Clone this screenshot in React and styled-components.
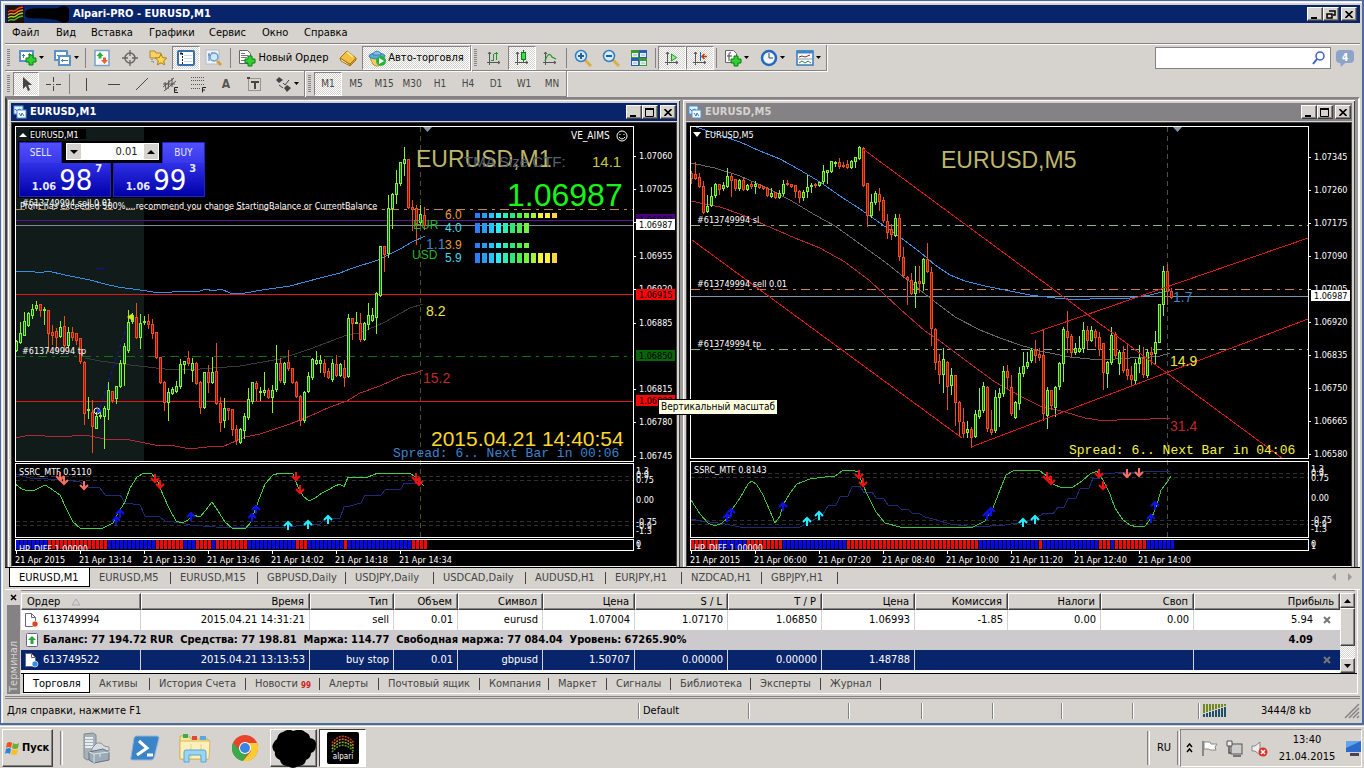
import React from 'react';
import styled, { createGlobalStyle, css } from 'styled-components';


const UI_FONT = '"DejaVu Sans Condensed", "DejaVu Sans", sans-serif';
const ARIAL = '"Liberation Sans", Arial, sans-serif';
const MONO = '"Liberation Mono", "Courier New", monospace';
const FACE = '#d6d3ce';
const NAVY = '#08246b';


const GlobalStyle = createGlobalStyle`
    * { box-sizing: border-box; }
    body {
        margin: 0;
        background: #3a6ea5;
        font-family: ${UI_FONT};
        font-size: 11px;
        line-height: 14px;
        color: #000;
    }
    button, input { font: inherit; color: inherit; }
`;


const raised = css`
    border: 1px solid;
    border-color: #fff #404040 #404040 #fff;
    box-shadow: inset -1px -1px 0 #848284;
`;

const dither = css`
    background: repeating-conic-gradient(#fff 0 25%, ${FACE} 0 50%) 0 0 / 2px 2px;
`;


/* ---------- shell ---------- */

const Desktop = styled.div`
    display: flex;
    flex-direction: column;
    min-height: 100vh;
`;

const AppWindow = styled.div`
    position: relative;
    display: flex;
    flex-direction: column;
    padding: 4px 2px 0 4px;
    background: ${FACE};
    border: 1px solid #4a6c9c;
    border-width: 1px 2px 2px 1px;
    box-shadow: inset 1px 1px 0 #e8e6f0, inset 2px 2px 0 #fff;
`;

const TitleBar = styled.header`
    display: flex;
    align-items: center;
    height: 18px;
    padding: 0 ${({ $child }) => ($child ? 1 : 3)}px 0 2px;
    background: ${({ $inactive }) => ($inactive ? '#848284' : NAVY)};
    color: ${({ $inactive }) => ($inactive ? '#d6d3ce' : '#fff')};
    font-weight: bold;
`;

const TitleText = styled.span`
    flex: 1;
    padding-left: 3px;
`;

const CaptionButtons = styled.div`
    display: flex;

    button:last-child { margin-left: 2px; }
`;

const CaptionButton = styled.button`
    ${raised}
    display: grid;
    place-items: center;
    width: 16px;
    height: 14px;
    padding: 0;
    background: ${FACE};
`;

const MenuBar = styled.nav`
    display: flex;
    height: 20px;
    align-items: center;
    padding-left: 1px;
`;

const MenuItem = styled.button`
    width: ${({ $w }) => $w}px;
    padding: 0 0 0 6px;
    border: 0;
    background: none;
    text-align: left;
`;


/* ---------- toolbars ---------- */

const TopRow = styled.div`
    display: flex;
    height: 28px;
    padding-top: 1px;
    border-top: 1px solid #848284;
    box-shadow: inset 0 1px 0 #fff;
    justify-content: space-between;
`;

const ToolGroup = styled.div`
    display: flex;
    align-items: center;
    height: 26px;
    padding-left: 2px;
    border-right: 1px solid #848284;
    border-bottom: 1px solid #848284;
    box-shadow: 1px 1px 0 #fff;
`;

const Groups = styled.div`
    display: flex;
    gap: 1px;
`;

const Grip = styled.span`
    width: 3px;
    height: 18px;
    margin-right: 3px;
    background: repeating-linear-gradient(#848284 0 1px, ${FACE} 1px 2px);
`;

const Tool = styled.button`
    display: flex;
    align-items: center;
    justify-content: center;
    gap: 2px;
    width: ${({ $w }) => ($w ? `${$w}px` : '28px')};
    height: 24px;
    padding: 0;
    border: 1px solid transparent;
    background: none;
    white-space: nowrap;
    ${({ $on }) => $on && css`
        ${dither}
        border-color: #848284 #fff #fff #848284;
        background-clip: padding-box;
    `}

    b { color: #555; font-size: 12px; }
`;

const Period = styled(Tool)`
    color: #444;
    font-size: 10px;
`;

const Divider = styled.span`
    width: 1px;
    height: 20px;
    margin: 0 2px;
    background: #848284;
`;

const SearchArea = styled.div`
    display: flex;
    align-items: center;
    gap: 4px;
    padding-right: 5px;
`;

const SearchBox = styled.label`
    display: flex;
    align-items: center;
    width: 176px;
    height: 22px;
    padding-right: 4px;
    background: #fff;
    border: 1px solid #848284;

    input {
        flex: 1;
        min-width: 0;
        border: 0;
        outline: 0;
        background: none;
    }
`;


/* ---------- chart windows ---------- */

const Workspace = styled.main`
    display: flex;
    gap: 3px;
    padding: 1px 3px 0 1px;
    background: #9c9a98;
    border: 2px solid;
    border-color: #848284 #fff #848284 #404040;
    border-bottom: 0;
`;

const ChildWindow = styled.section`
    flex: 1;
    min-width: 0;
    padding: 3px 3px 0;
    background: ${FACE};
    box-shadow: inset 1px 1px 0 #fff, inset -1px 0 0 #404040;
`;

const ChartFrame = styled.div`
    position: relative;
    margin-top: 1px;
    border: 1px solid #404040;
    border-bottom-color: #eee;
    background: #000;

    svg { display: block; }
`;

const ChartSvg = styled.svg`
    width: 100%;
    height: auto;
    font-family: ${UI_FONT};
    font-size: 9px;
    fill: #fff;
`;

const TradePanel = styled.div`
    position: absolute;
    top: 18px;
    left: 6px;
    width: 188px;
    padding: 1px;
    background: #000;
    color: #fff;
`;

const TradeTop = styled.div`
    display: flex;
    justify-content: space-between;
`;

const blue = css`
    border: 1px solid #2222c0;
    padding: 0;
    color: #e8e8ff;
`;

const SideButton = styled.button`
    ${blue}
    width: 43px;
    height: 21px;
    background: linear-gradient(#5050ff, #3838e8);
    border-bottom: 0;
    font-size: 10px;
`;

const Lot = styled.div`
    display: flex;
    height: 17px;
    margin-top: 1px;

    input {
        width: 61px;
        padding: 0 5px;
        border: 0;
        text-align: right;
        color: #222;
    }

    button {
        display: grid;
        place-items: center;
        width: 16px;
        padding: 0;
        border: 1px solid #fff;
        background: ${FACE};
    }
`;

const TradeBottom = styled.div`
    display: flex;
    gap: 2px;
`;

const PriceButton = styled.button`
    ${blue}
    flex: 1;
    display: flex;
    align-items: flex-end;
    justify-content: center;
    gap: 3px;
    height: 34px;
    padding: 0 0 3px 4px;
    background: linear-gradient(#3030e8, #0000a8);
    border-top: 0;

    small { font-size: 11px; line-height: 12px; font-weight: bold; }
    big { font-size: 29px; line-height: 26px; color: #fff; }
    sup { font-size: 11px; line-height: 12px; align-self: flex-start; font-weight: bold; }
`;

const Tooltip = styled.div`
    position: absolute;
    left: 657px;
    top: 398px;
    height: 16px;
    padding: 0 2px;
    border: 1px solid #000;
    background: #ffffe1;
    font-size: 10px;
    white-space: nowrap;
`;


/* ---------- tabs ---------- */

const TabStrip = styled.div`
    display: flex;
    align-items: flex-start;
    height: ${({ $h }) => $h}px;
    padding-left: ${({ $pad }) => $pad}px;
    border-top: 1px solid #000;
    color: #444;
`;

const Tab = styled.button`
    display: flex;
    align-items: center;
    gap: 3px;
    width: ${({ $w }) => $w}px;
    height: 19px;
    padding: 1px 0 0 9px;
    border: 0;
    background: linear-gradient(#444, #444) right 4px / 1px 12px no-repeat;
    white-space: nowrap;
    ${({ $active }) => $active && css`
        background: #fff;
        border: 1px solid #000;
        border-top: 0;
        color: #000;
    `}

    b { color: #d02020; font-size: 8px; line-height: 8px; padding-top: 3px; }
`;

const TabArrows = styled.span`
    display: flex;
    gap: 12px;
    margin: 5px 8px 0 auto;
`;


/* ---------- terminal ---------- */

const Terminal = styled.section`
    display: flex;
    border-top: 1px solid #fff;
    padding: 0 2px 2px 0;
    border-bottom: 1px solid #848284;
`;

const Rail = styled.div`
    display: flex;
    flex-direction: column;
    align-items: center;
    width: 16px;

    button {
        border: 0;
        background: none;
        padding: 0;
        height: 15px;
    }
`;

const RailLabel = styled.div`
    flex: 1;
    width: 13px;
    padding-top: 2px;
    background: #848284;
    color: #d6d3ce;
    line-height: 13px;
    writing-mode: vertical-rl;
    transform: rotate(180deg);
`;

const TerminalBody = styled.div`
    flex: 1;
    min-width: 0;
    border-right: 1px solid #fff;
    border-bottom: 1px solid #fff;
`;

const TableArea = styled.div`
    display: flex;
    height: 83px;
    margin-right: 2px;
    padding-top: 2px;
    border-top: 1px solid #848284;
    overflow: hidden;
`;

const TableView = styled.div`
    flex: 1;
    min-width: 0;
    overflow: hidden;
    background: #fff;
`;

const Table = styled.table`
    width: 100%;
    table-layout: fixed;
    border-collapse: separate;
    border-spacing: 0;

    th {
        ${raised}
        height: 17px;
        padding: 0 5px;
        background: ${FACE};
        font-weight: normal;
        text-align: right;
    }
    th:first-child { text-align: left; }

    td {
        height: 20px;
        padding: 0 4px;
        border-right: 1px solid #d6d3ce;
        text-align: right;
        white-space: nowrap;
    }
    td:first-child { text-align: left; padding: 0 3px; }
    td:last-child { border-right: 0; padding-right: 6px; }
`;

const Row = styled.tr`
    ${({ $selected }) => $selected && css`
        background: ${NAVY};
        color: #fff;
    `}
    ${({ $summary }) => $summary && css`
        background: #cccacc;
        font-weight: bold;

        td { border-right: 0; }
    `}
`;

const Cell = styled.span`
    display: flex;
    align-items: center;
    gap: 4px;
    justify-content: ${({ $end }) => ($end ? 'flex-end' : 'flex-start')};
`;

const IconSlot = styled.span`
    display: grid;
    place-items: center;
    width: 15px;
    height: 16px;
`;

const CloseMark = styled.button`
    width: 17px;
    padding: 0 0 0 6px;
    border: 0;
    background: none;
    display: flex;
`;

const ScrollBar = styled.div`
    ${dither}
    display: flex;
    flex-direction: column;
    width: 15px;

    button {
        ${raised}
        display: grid;
        place-items: center;
        height: 15px;
        padding: 0;
        background: ${FACE};
    }
    span {
        ${raised}
        height: 38px;
        margin-bottom: auto;
        background: ${FACE};
    }
`;


/* ---------- status bar ---------- */

const StatusBar = styled.footer`
    display: flex;
    align-items: center;
    height: 25px;
    padding-left: 2px;
    box-shadow: inset 0 1px 0 #848284;
    margin-top: 1px;
`;

const StatusCell = styled.span`
    display: flex;
    align-items: center;
    height: 16px;
    ${({ $w }) => ($w ? `width: ${$w}px;` : 'flex: 1;')}
    padding-left: ${({ $first }) => ($first ? 0 : 4)}px;
    border-left: ${({ $first }) => ($first ? 0 : 1)}px solid #848284;
    box-shadow: ${({ $first }) => ($first ? 'none' : 'inset 1px 0 0 #fff')};
    gap: 34px;
`;


/* ---------- task bar ---------- */

const TaskBar = styled.footer`
    display: flex;
    align-items: center;
    height: 44px;
    padding: 2px 2px 0 2px;
    background: ${FACE};
    box-shadow: inset 0 1px 0 #d6d3ce, inset 0 2px 0 #fff;
`;

const StartButton = styled.button`
    ${raised}
    display: flex;
    align-items: center;
    gap: 1px;
    width: 51px;
    height: 38px;
    padding: 0 2px;
    background: ${FACE};
    font-weight: bold;
`;

const TaskDivider = styled.span`
    width: 3px;
    height: 34px;
    margin-left: ${({ $gap }) => $gap}px;
    border-left: 1px solid #848284;
    border-right: 1px solid #fff;
`;

const Launcher = styled.button`
    display: grid;
    place-items: center;
    width: 50px;
    height: 38px;
    padding: 0;
    border: 0;
    background: none;
`;

const TaskButton = styled(Launcher)`
    ${raised}
    width: 47px;
    margin-right: 2px;
    overflow: visible;
    ${({ $active }) => $active && css`
        background: #fff;
        border-color: #404040 #fff #fff #404040;
        box-shadow: none;
    `}
`;

const Quick = styled.div`
    display: flex;
    margin-left: 7px;
    flex: 1;
`;

const Tray = styled.div`
    display: flex;
    align-items: center;
    gap: 8px;
    width: 182px;
    height: 38px;
    padding: 0 0 0 5px;
    border: 1px solid;
    border-color: #848284 #fff #fff #848284;
`;

const Lang = styled.span`
    padding: 0 6px 0 7px;
`;

const Clock = styled.time`
    flex: 1;
    text-align: center;
    line-height: 17px;
`;


/* ---------- icons ---------- */

const Svg = ({ w = 18, h = w, children }) => (
    <svg width={w} height={h} viewBox={`0 0 ${w} ${h}`} fill="none" aria-hidden="true">{children}</svg>
);

const Down = () => <Svg w={5} h={3}><path d="M0 0h5L2.5 3z" fill="#000" /></Svg>;
const Plus = ({ x, y }) => (
    <path d={`M${x + 3} ${y}h4v3h3v4h-3v3h-4v-3h-3v-4h3z`} fill="#2fd02f" stroke="#0a7d12" />
);
const Axes = () => <path d="M4.500 3v13M2 13.500h13M3 5l1.500-2L6 5M13 12l2 1.500-2 1.500" stroke="#555" />;

const icons = {
    newChart: <Svg><rect x="1" y="2" width="13" height="10" fill="#fff" stroke="#5a92c8" strokeWidth="2" /><path d="M4.500 5v4M3 6.500h3M10.500 4v3M9 5.500h3" stroke="#5a7a9c" /><Plus x={7} y={6} /></Svg>,
    profiles: <Svg><rect x="1" y="2" width="12" height="9" fill="#fff" stroke="#5a92c8" strokeWidth="2" /><path d="M3 6.500h3" stroke="#5a7a9c" /><rect x="5" y="7" width="11" height="9" fill="#fff" stroke="#5a92c8" strokeWidth="2" /><path d="M8.500 10v3M7 11.500h7" stroke="#5a7a9c" /></Svg>,
    market: <Svg><rect x="2" y="1.500" width="14" height="15" fill="#fff" stroke="#7aa0cc" strokeWidth="1.500" /><path d="M7 3l3.500 4H8.500v2.500h-3V7h-2z" fill="#2cae3a" /><path d="M11.500 15L8 11h2V8.500h3V11h2z" fill="#f06030" /></Svg>,
    target: <Svg><circle cx="9" cy="9" r="5" stroke="#666" strokeWidth="1.500" /><path d="M9 1v6M9 11v6M1 9h6M11 9h6" stroke="#666" strokeWidth="1.300" /></Svg>,
    navigator: <Svg><path d="M1 2h5l1 2h5v5H1z" fill="#f4d468" stroke="#b08a28" /><path d="M3 10v3h3" stroke="#666" strokeDasharray="1 1" /><path d="M12 5l1.700 3.600 4 .5-3 2.700.8 4-3.500-2-3.500 2 .8-4-3-2.700 4-.5z" fill="#ffd84a" stroke="#b07a18" /></Svg>,
    dataWindow: <Svg><rect x="1" y="2" width="16" height="14" rx="1" fill="#fff" stroke="#3a6eb4" strokeWidth="2" /><path d="M3 4.500h2" stroke="#222" strokeWidth="2" /><path d="M5.500 4v11" stroke="#222" strokeDasharray="2 1" /><path d="M7 6.500h8M7 9.500h8M7 12.500h8" stroke="#c8dcf4" /></Svg>,
    tester: <Svg><rect x="1" y="1" width="13" height="14" fill="#eef4fb" stroke="#b4bcc8" /><path d="M4 4v8M3 6h2M7 3v4M11 4v4" stroke="#4a7ab4" /><circle cx="9" cy="8" r="4" fill="#cfe8fa" stroke="#6a9ccc" strokeWidth="1.500" /><path d="M12 12l4 4" stroke="#d8a030" strokeWidth="3" /></Svg>,
    order: <Svg><path d="M1.500 1.500h8l3 3v10h-11z" fill="#fff" stroke="#666" /><path d="M3 6.500h7M3 8.500h6M3 11.500h4M3 4.500h4" stroke="#777" /><Plus x={7} y={7} /></Svg>,
    book: <Svg><path d="M1 9l7-7 4 3 5 4-6 6z" fill="#f0c040" stroke="#a87414" /><path d="M1 9l9 6 1 2-9-5z" fill="#fff4c8" stroke="#a87414" /><path d="M11 15l6-6v2l-6 6z" fill="#d89a20" stroke="#a87414" /><path d="M8 3l6 5" stroke="#fbe38c" strokeWidth="2" /></Svg>,
    expert: <Svg><path d="M2 8c2 7 4 9 7 9s6-3 7-9z" fill="#f4cc58" stroke="#b8902c" /><ellipse cx="9" cy="7" rx="8" ry="3" fill="#5aa8dc" stroke="#3a7cb0" /><path d="M5 6c0-5 8-5 8 0z" fill="#7cc4ee" stroke="#3a7cb0" /><circle cx="13" cy="12" r="5" fill="#24b43a" /><path d="M11 9l5 3-5 3z" fill="#fff" /></Svg>,
    bars: <Svg><Axes /><path d="M8.500 5v7M6 11.500h2M11.500 3v8M9 4.500h4" stroke="#1c9a2c" /></Svg>,
    candles: <Svg><Axes /><path d="M10.500 1v12" stroke="#0a7d12" /><rect x="8.500" y="3.500" width="4" height="7" fill="#3cdc4c" stroke="#0a7d12" /></Svg>,
    line: <Svg><Axes /><path d="M4 12c3-8 5-8 7-4l4 2" stroke="#1c9a2c" strokeWidth="1.300" /></Svg>,
    zoomIn: <Svg><path d="M11 11l6 6" stroke="#d8b040" strokeWidth="3" /><circle cx="7" cy="7" r="5.500" fill="#d4ecfc" stroke="#3a7cc0" strokeWidth="1.500" /><path d="M4 7h6M7 4v6" stroke="#2060a8" strokeWidth="2" /></Svg>,
    zoomOut: <Svg><path d="M11 11l6 6" stroke="#d8b040" strokeWidth="3" /><circle cx="7" cy="7" r="5.500" fill="#d4ecfc" stroke="#3a7cc0" strokeWidth="1.500" /><path d="M4 7h6" stroke="#2060a8" strokeWidth="2" /></Svg>,
    tile: <Svg><path d="M1 1h8v8H1z" fill="#3a9a2c" /><path d="M9 1h8v8H9zM1 9h8v8H1z" fill="#2a5cb8" /><path d="M9 9h8v8H9z" fill="#3a9a2c" /><path d="M2 4h6v4H2zM10 4h6v4h-6zM2 12h6v4H2zM10 12h6v4h-6z" fill="#e8f0ff" /><path d="M3 6h4M11 6h4M3 14h4M11 14h4" stroke="#9ac" /></Svg>,
    autoScroll: <Svg><Axes /><path d="M8.500 5l5 3.500-5 3.500z" fill="#8cf08c" stroke="#1c9a2c" /></Svg>,
    shift: <Svg><Axes /><path d="M9.500 3v9" stroke="#2060a8" /><path d="M16 7.500h-5M13.500 5L11 7.500l2.500 2.500" stroke="#c03c10" strokeWidth="1.500" /></Svg>,
    indicators: <Svg><path d="M1.500 1.500h8l3 3v9h-11z" fill="#fff" stroke="#666" /><path d="M7 4c-2-1-2 0-2 2v6M3 7h5" stroke="#444" /><Plus x={7} y={7} /></Svg>,
    clock: <Svg><circle cx="9" cy="9" r="7" fill="#eef6ff" stroke="#2468bc" strokeWidth="2.500" /><path d="M9 4v5h4" stroke="#444" /></Svg>,
    template: <Svg><rect x="1" y="2" width="16" height="14" fill="#fff" stroke="#3a78b8" strokeWidth="1.500" /><path d="M1 3h16" stroke="#3a88cc" strokeWidth="3" /><path d="M3 8l3-1 3 1 5-2" stroke="#8c2c1c" /><path d="M1 10h16" stroke="#7a98b8" /><path d="M3 14l3-2 3 2 3-2 3 2" stroke="#2c8c3c" /></Svg>,
    cursor: <Svg><path d="M6 2v12l3-3 2 5 2-1-2-5h4z" fill="#444" /></Svg>,
    cross: <Svg><path d="M9.500 2v5M9.500 11v5M2 9.500h5M12 9.500h5M9 9.500h1" stroke="#444" /></Svg>,
    vline: <Svg><path d="M9.500 3v13" stroke="#444" /></Svg>,
    hline: <Svg><path d="M3 9.500h12" stroke="#444" /></Svg>,
    trend: <Svg><path d="M3 15L15 3" stroke="#444" /></Svg>,
    channel: <Svg><path d="M2 12L13 3M3 16L15 6M4 7l1 8M8 5l-1 9M11 3v9M2 9h12" stroke="#555" /><path d="M17 12.500h-3.500v5H17M13 15h3" stroke="#222" /></Svg>,
    fibo: <Svg><path d="M2 2.500h14M2 5.500h14M2 9.500h14M2 13.500h9" stroke="#555" strokeDasharray="1 1" /><path d="M17 12.500h-3.500v5M13 15h3" stroke="#222" /></Svg>,
    label: <Svg><path d="M3.500 3.500h12v12h-12z" stroke="#555" strokeDasharray="1 1" /><path d="M2 2h3v2H2z" fill="#444" /><path d="M6 7h8M10 7v7" stroke="#444" strokeWidth="2" /></Svg>,
    shapes: <Svg><path d="M5 2l4 3-4 3-3-3zM13 10l4 3-4 4-3-4z" fill="#444" /><path d="M9 8l2 2 4-5M9 13l-4-3" stroke="#444" /></Svg>,
    search: <Svg w={14}><circle cx="8" cy="5" r="4" stroke="#3a5cc0" strokeWidth="1.500" /><path d="M5 8l-4 5" stroke="#3a5cc0" strokeWidth="2" /></Svg>,
};

const AlpariLogo = () => (
    <Svg w={17}>
        <rect width="17" height="17" fill="#201008" />
        <path d="M1 6c4-4 5 1 8-2s4-2 7-3" stroke="#f04020" strokeWidth="1.500" />
        <path d="M1 9c4-4 5 1 8-2s4-2 7-3" stroke="#f09020" strokeWidth="1.500" />
        <path d="M1 12c4-4 5 1 8-2s4-2 7-3" stroke="#b0d030" strokeWidth="1.500" />
        <path d="M1 15c4-4 5 1 8-2s4-2 7-3" stroke="#40c030" strokeWidth="1.500" />
    </Svg>
);

const TitleScribble = () => (
    <Svg w={46} h={18}>
        <path d="M3 5C8 2 26 4 34 3c4-3 10-3 11 2v10c-2 4-8 3-10 1-5-3-24-2-30-3C-1 12 1 7 3 5z" fill="#000" />
    </Svg>
);

const ChildIcon = () => (
    <Svg w={14}>
        <rect x="1" y="1" width="9" height="8" fill="#e4f2ff" stroke="#4a94d8" />
        <path d="M2 4l2 2 2-2 2 1" stroke="#2c78c0" />
        <rect x="4" y="5" width="9" height="8" fill="#fff" stroke="#4a94d8" />
        <path d="M6 8l2 3 1-3 2 3" stroke="#2c78c0" />
    </Svg>
);

const Minimize = () => <Svg w={10} h={9}><path d="M1 8h6" stroke="#000" strokeWidth="2" /></Svg>;
const Maximize = () => <Svg w={10} h={9}><path d="M0 1h9" stroke="#000" strokeWidth="2" /><path d="M.5 1v7.500h8V1" stroke="#000" /></Svg>;
const Restore = () => <Svg w={10} h={9}><path d="M3 1h6v4H7M1 4h5v4H1z" stroke="#000" strokeWidth="1.500" /></Svg>;
const Close = () => <Svg w={8} h={7}><path d="M.5 0l7 7M7.500 0l-7 7" stroke="#000" strokeWidth="1.600" /></Svg>;
const Cross = () => <Svg w={8}><path d="M1 1l6 6M7 1L1 7" stroke="#777" strokeWidth="2" /></Svg>;

const OrderIcon = ({ color }) => (
    <Svg w={15} h={16}>
        <path d="M1.500 1.500h6l4 4v9h-10z" fill="#fff" stroke="#667" />
        <path d="M7.500 1.500v4h4" stroke="#667" />
        <circle cx="11" cy="12" r="3" fill={color} stroke="#fff" strokeWidth=".6" />
    </Svg>
);

const BalanceIcon = () => (
    <Svg w={12} h={14}>
        <rect x=".5" y=".5" width="11" height="13" rx="1" fill="#fff" stroke="#667" />
        <path d="M6 3l4 4H7.500v4h-3V7H2z" fill="#28a838" />
    </Svg>
);


/* ---------- chart data: direction, high, body top, body bottom, low ---------- */

const parse = (text) => text.trim().split(/\s*,\s*/).map((row) => {
    const [dir, ...nums] = row.split(' ');
    return [dir, ...nums.map(Number)];
});

const CANDLES_M1 = parse(`
u 340 341 350 351,u 322 333 342 343,u 312 321 335 335,u 312 313 325 326,u 304 309 315 318,u 301 305 308 310,d 304 304 310 316,u 307 309 310 324,
d 310 310 333 351,d 325 332 335 344,d 328 331 337 350,u 321 327 336 337,d 316 326 345 351,u 327 332 345 347,d 327 332 337 340,d 333 333 340 344,
d 338 338 361 363,d 361 362 413 424,u 397 409 410 418,d 400 412 426 452,u 412 416 428 428,u 412 415 416 418,u 406 408 416 448,u 382 390 409 419,
d 391 391 400 402,u 386 386 398 403,u 360 363 386 387,u 343 346 363 385,u 310 322 350 352,u 313 315 321 323,d 303 317 337 338,u 314 323 337 348,
u 316 321 322 324,d 314 321 324 328,d 319 324 333 338,d 332 332 357 358,d 357 357 382 383,d 381 382 402 410,u 388 392 402 420,u 387 389 393 394,
u 381 386 391 392,u 359 364 386 388,u 361 361 364 373,d 351 358 363 365,u 358 363 370 381,d 362 363 383 384,d 381 382 407 413,u 372 372 407 408,
d 365 372 382 392,u 357 372 382 383,d 343 371 403 404,d 397 403 422 431,u 398 408 420 427,d 408 408 410 419,d 409 409 429 435,d 425 429 440 444,
u 428 429 442 443,u 413 416 430 438,u 388 399 417 419,u 382 382 401 403,d 381 383 388 400,u 387 391 392 400,u 372 390 392 395,d 388 390 397 398,
u 385 390 397 412,u 345 363 389 391,d 358 363 380 382,u 362 363 382 384,d 350 362 368 370,d 368 368 382 383,d 381 382 396 397,d 395 396 420 425,
u 391 392 420 422,u 372 376 391 392,u 358 359 377 379,u 351 360 363 364,u 355 360 363 372,d 359 363 372 376,d 368 371 377 378,u 359 363 379 381,
d 355 364 375 376,u 363 364 375 376,d 360 368 377 386,u 314 318 376 377,d 318 318 323 339,u 312 322 323 323,d 313 323 339 341,u 322 323 339 340,
u 303 315 324 329,u 308 315 320 321,u 292 293 317 333,u 246 246 295 296,d 246 246 254 271,u 195 208 253 257,u 193 194 208 228,u 170 183 194 203,
u 162 162 183 185,u 147 159 163 175,d 159 159 207 208,d 200 207 209 230,d 205 208 223 244,u 205 214 222 224,d 207 215 225 229`);

const CANDLES_M5 = parse(`
d 171 173 178 183,d 162 174 178 179,d 173 177 186 187,d 181 186 212 213,u 195 206 211 212,u 187 196 205 206,u 183 184 195 197,d 184 184 189 194,
u 182 185 188 190,u 168 176 186 187,d 173 176 180 196,d 179 179 188 190,u 179 180 188 190,d 177 180 189 190,u 184 185 189 190,d 182 184 186 188,
u 181 184 186 193,d 184 184 187 188,d 186 186 188 189,d 187 188 195 196,u 188 193 196 197,d 192 192 197 198,u 190 193 197 198,u 180 184 193 195,
d 180 183 184 185,d 184 184 186 187,d 185 185 191 197,d 190 191 197 202,u 190 192 197 200,u 175 187 191 197,u 183 185 186 192,d 183 184 185 187,
u 182 182 185 186,u 165 171 181 183,u 170 170 172 183,u 161 161 171 172,u 161 162 163 166,d 158 162 166 168,d 162 165 166 167,d 160 164 167 168,
u 160 161 167 168,u 157 157 161 167,u 146 147 158 159,d 147 148 185 186,d 183 183 215 226,u 194 202 215 217,u 191 193 202 204,d 188 194 201 210,
d 197 200 220 222,d 214 221 232 238,d 224 229 234 239,u 214 218 235 236,d 214 218 256 260,d 247 257 275 277,d 276 277 279 304,d 273 280 293 294,
u 266 282 293 307,d 266 281 283 292,u 258 259 283 290,d 243 259 271 272,d 267 272 328 345,d 328 329 362 369,d 354 361 374 383,u 348 359 374 392,
d 361 362 386 409,u 368 375 385 394,d 375 375 402 425,d 401 402 421 435,d 408 422 433 437,u 421 429 432 437,d 427 429 437 447,u 410 414 436 437,
u 388 410 416 418,u 382 386 410 412,d 386 387 428 431,d 410 429 432 434,u 390 397 430 432,u 388 393 397 426,u 366 371 393 396,d 365 371 377 388,
d 375 387 413 415,u 401 402 417 418,u 367 373 403 409,u 352 366 373 376,u 352 362 366 368,u 348 350 360 362,d 340 350 355 362,d 348 354 357 360,
d 329 355 413 420,u 387 390 415 428,d 390 390 405 409,u 386 387 407 416,u 362 363 386 389,u 327 329 363 381,d 311 331 337 352,d 334 336 352 356,
u 343 348 352 354,u 336 348 351 352,u 322 330 348 352,d 326 330 340 348,u 326 330 340 341,d 329 331 337 346,d 332 337 349 355,d 343 343 372 389,
u 361 362 373 387,u 327 335 362 364,d 332 334 355 358,u 350 352 363 374,d 346 352 370 372,d 343 369 375 379,d 366 375 379 386,u 359 363 380 384,
u 345 358 363 372,d 347 358 374 377,u 349 352 375 377,d 347 352 354 364,u 331 342 353 363,u 304 304 342 342,u 266 271 304 315,d 264 271 291 304,
d 288 291 297 298`);

const BAR_COLORS = ['#2a7ff8', '#2a9cf4', '#20c4ff', '#2aeef4', '#2aefb4', '#2ae87a', '#4cee4c', '#74f43c', '#a4f43c', '#f4f43c', '#fcf03c', '#f8d840'];

const Candles = ({ data, x }) => data.map(([dir, high, top, bottom, low], i) => {
    const cx = x + i * 4;
    const up = dir === 'u';
    const edge = up ? '#8cf032' : '#e4501e';
    return (
        <g key={cx}>
            <rect x={cx} y={high} width="1" height={low - high + 1} fill={edge} />
            <rect x={cx - 1} y={top} width="3" height={bottom - top + 1} fill={edge} />
            {bottom - top > 1 && (
                <rect x={cx} y={top + 1} width="1" height={bottom - top - 1} fill={up ? '#007020' : '#a80c04'} />
            )}
        </g>
    );
});

const Strength = ({ x, runs }) => {
    const cells = runs.flatMap((n) => Array(Math.abs(n)).fill(n > 0 ? '#0808f0' : '#f00808'));
    return cells.map((fill, i) => <rect key={i} x={x + i * 4} y="540" width="3" height="9" fill={fill} />);
};

const ARROWS = { r: '#f41010', s: '#f87060', b: '#1010e8', c: '#20f0ff' };

const Arrows = ({ list }) => list.map(([kind, x, y]) => {
    const s = kind === 'r' || kind === 's' ? 1 : -1;
    return (
        <path
            key={`${x}-${y}`}
            d={`M${x} ${y - 4 * s}V${y + 4 * s}M${x - 4} ${y}L${x} ${y + 4 * s}L${x + 4} ${y}`}
            stroke={ARROWS[kind]}
            strokeWidth="2"
            fill="none"
        />
    );
});

const Curve = ({ pts, color }) => <polyline points={pts} stroke={color} fill="none" shapeRendering="crispEdges" />;

const HLine = ({ x1, x2, y, color, dash }) => (dash
    ? <path d={`M${x1} ${y}.500H${x2}`} stroke={color} strokeDasharray={dash} shapeRendering="crispEdges" />
    : <rect x={x1} y={y} width={x2 - x1} height="1" fill={color} />
);

const DASHDOT = '9 5 3 5';

const Panels = ({ left, right, split, osc }) => (
    <g shapeRendering="crispEdges" fill="none" stroke="#fff">
        <path d={`M${left}.500 126.500H${right}.500V${split}.500H${left}.500z`} />
        <path d={`M${left}.500 ${osc}.500H${right}.500V537.500H${left}.500z`} />
        <path d={`M${left}.500 539.500H${right}.500V550.500H${left}.500z`} />
    </g>
);

const PriceScale = ({ x, labels }) => labels.map(([value, y]) => (
    <g key={value}>
        <rect x={x} y={y} width="3" height="1" />
        <text x={x + 6} y={y + 3}>{value}</text>
    </g>
));

const PriceTag = ({ x, y, fill, color = '#000', children }) => (
    <g>
        <rect x={x} y={y} width="39" height="11" fill={fill} />
        <text x={x + 3} y={y + 9} fill={color}>{children}</text>
    </g>
);

const TimeScale = ({ x, labels }) => labels.map((label, i) => (
    <g key={label}>
        <rect x={x + 1 + i * 64} y="551" width="1" height="3" />
        <text x={x + i * 64} y="563">21 Apr {label}</text>
    </g>
));

const OscScale = ({ x, mid }) => (
    <g>
        {[['1.3', -26], ['0.9', -22], ['0.75', -17], ['0.00', 3], ['-0.75', 25], ['-0.9', 29], ['-1.3', 34]].map(([label, dy]) => (
            <text key={label} x={x} y={mid + dy}>{label}</text>
        ))}
        <text x={x} y="547">0</text>
        <text x={x} y="549">1</text>
    </g>
);

const Meter = ({ y, h, count }) => BAR_COLORS.slice(0, count).map((c, i) => (
    <rect key={c} x={475 + i * 7} y={y} width="5" height={h} fill={c} />
));


function ChartM1() {
    return (
        <ChartSvg viewBox="12 123 664 443" role="img" aria-label="EURUSD,M1">
            <rect x="16" y="127" width="128" height="334" fill="#111c1a" />
            <path d="M420.500 127V537" stroke="#505020" strokeDasharray="5 4" />
            <path d="M423 127h9l-4.500 5z" fill="#8494a4" />
            <HLine x1={16} x2={633} y={209} color="#b8865a" dash={DASHDOT} />
            <HLine x1={16} x2={633} y={220} color="#5a1490" />
            <HLine x1={16} x2={633} y={225} color="#7c8c9c" />
            <HLine x1={16} x2={633} y={294} color="#e01818" />
            <HLine x1={16} x2={633} y={356} color="#107010" dash={DASHDOT} />
            <HLine x1={16} x2={633} y={401} color="#e01818" />
            <Curve color="#3c8ce0" pts="15,272 30,271 40,273 48,271 65,275 90,280 105,284 118,287 140,290 160,293 185,291 197,292 206,289 213,291 221,289 230,293 245,293 262,290 290,286 320,278 340,273 350,269 378,260 400,249 412,242 425,236" />
            <Curve color="#3a3a3a" pts="85,358 100,361 130,365 165,369 200,369 240,366 280,359 310,349 347,335 360,333 385,322 410,308 423,304" />
            <Curve color="#b02838" pts="15,438 30,435 60,437 85,435 105,439 125,439 145,443 155,445 175,446 190,449 215,446 222,447 245,437 260,434 290,424 310,416 330,407 347,401 360,393 380,386 402,376 415,373 423,370" />
            <path d="M97 268.500h8" stroke="#1010b0" />
            <path d="M100 408L130 316" stroke="#1414b8" strokeDasharray="4 3" />
            <g shapeRendering="crispEdges"><Candles data={CANDLES_M1} x={16} /></g>
            <path d="M133 313v8l-6-4z" fill="#d8e020" />
            <circle cx="97" cy="411" r="3" fill="none" stroke="#fff" />
            <path d="M97 408l5 3-5 3z" fill="#2040e0" />

            <rect x="29" y="129" width="57" height="10" fill="#000" />
            <path d="M19 137h8l-4-4z" />
            <text x="30" y="138">EURUSD,M1</text>
            <text x="571" y="139" fontSize="10">VE_AIMS</text>
            <circle cx="622" cy="136" r="5" fill="none" stroke="#fff" />
            <path d="M620 134v1M624 134v1M619 137q3 4 6 0" stroke="#fff" fill="none" />

            <g fontFamily={ARIAL}>
                <text x="416" y="167" fontSize="23" fill="#bdb76b">EURUSD,M1</text>
                <text x="464" y="167" fontSize="15" fill="#56626e">TMA Size CTF:</text>
                <text x="592" y="167" fontSize="15" fill="#c8c83c">14.1</text>
                <text x="507" y="206" fontSize="32" fill="#18f418">1.06987</text>
                <text x="413" y="229" fontSize="12" fill="#2cb42c">EUR</text>
                <text x="412" y="259" fontSize="12" fill="#2cb42c">USD</text>
                <g fontSize="12">
                    <text x="445" y="219" fill="#e89c40">6.0</text>
                    <text x="445" y="232" fill="#40dce8">4.0</text>
                    <text x="445" y="249" fill="#e89c40">3.9</text>
                    <text x="445" y="262" fill="#40dce8">5.9</text>
                </g>
                <g fontSize="14">
                    <text x="426" y="249" fill="#3c84d0">1.1</text>
                    <text x="426" y="316" fill="#e8e840">8.2</text>
                    <text x="423" y="383" fill="#c02828">15.2</text>
                </g>
                <text x="431" y="446" fontSize="21" fill="#fcd828">2015.04.21 14:40:54</text>
            </g>
            <text x="393" y="457" fontFamily={MONO} fontSize="13" fill="#3c84d0">Spread: 6.. Next Bar in 00:06</text>

            <Meter y={213} h={5} count={12} />
            <Meter y={223} h={10} count={8} />
            <Meter y={243} h={5} count={8} />
            <Meter y={253} h={10} count={12} />

            <text x="20" y="209">Profit has exceeded 500%,...recommend you change StartingBalance or CurrentBalance</text>
            <text x="22" y="206">#613749994 sell 0.01</text>
            <text x="22" y="354">#613749994 tp</text>

            {[476, 480, 521, 525].map((y) => <HLine key={y} x1={16} x2={633} y={y} color="#303030" dash="4 3" />)}
            <Curve color="#1c2c78" pts="15,474 30,478 65,480 80,482 88,487 100,488 105,495 120,495 125,503 140,505 145,516 160,517 165,521 182,523 190,525 215,527 250,528 287,527 305,525 320,524 325,519 340,518 344,507 350,506 361,503 365,495 381,495 385,490 401,489 404,483 422,483" />
            <Curve color="#40d040" pts="15,484 22,489 28,491 35,490 45,485 50,488 60,495 66,508 73,522 80,528 90,529 103,528 113,523 118,513 125,502 130,488 137,477 144,473 152,474 158,482 163,495 170,510 176,521 182,523 188,520 193,515 200,517 205,511 212,502 218,511 225,522 232,528 245,529 251,522 258,502 265,484 273,475 280,473 293,474 298,487 303,496 309,501 315,498 322,493 328,490 335,486 340,484 344,487 348,477 368,477 378,473 410,473 415,477 424,486" />
            <Arrows list={[['s', 60, 476], ['s', 64, 480], ['s', 84, 485], ['r', 155, 478], ['r', 160, 484], ['b', 116, 521], ['b', 120, 514], ['b', 191, 517], ['b', 252, 518], ['b', 256, 510], ['r', 296, 476], ['r', 300, 489], ['c', 288, 526], ['c', 308, 525], ['c', 328, 520], ['r', 416, 477], ['r', 419, 481]]} />
            <text x="19" y="475">SSRC_MTF 0.5110</text>
            <Strength x={16} runs={[8, -15, 12, -7, 3, -4, 1, -8, 12, -3, 9, -1, 16, -4]} />
            <clipPath id="m1clip"><path d="M16 540h617v10H16z" /></clipPath>
            <text x="19" y="552" clipPath="url(#m1clip)">HP_DIFF 1.00000</text>

            <Panels left={15} right={633} split={461} osc={463} />
            <PriceScale x={633} labels={[['1.07060', 156], ['1.07025', 189], ['1.06990', 222], ['1.06955', 256], ['1.06920', 289], ['1.06885', 323], ['1.06815', 389], ['1.06780', 422], ['1.06745', 456]]} />
            <PriceTag x={636} y={214} fill="#4b0082">1.06992</PriceTag>
            <PriceTag x={636} y={219} fill="#fff">1.06987</PriceTag>
            <PriceTag x={636} y={289} fill="#f40808">1.06915</PriceTag>
            <PriceTag x={636} y={350} fill="#086408">1.06850</PriceTag>
            <PriceTag x={636} y={395} fill="#f40808">1.06800</PriceTag>
            <OscScale x={636} mid={500} />
            <TimeScale x={15} labels={['2015', '13:14', '13:30', '13:46', '14:02', '14:18', '14:34']} />
        </ChartSvg>
    );
}


function ChartM5() {
    return (
        <ChartSvg viewBox="687 123 664 443" role="img" aria-label="EURUSD,M5">
            <path d="M1167.500 127V537" stroke="#505040" strokeDasharray="5 4" />
            <path d="M1173 127h9l-4.500 5z" fill="#8494a4" />
            <HLine x1={691} x2={1308} y={225} color="#8cb48c" dash={DASHDOT} />
            <HLine x1={691} x2={1308} y={289} color="#c8864c" dash={DASHDOT} />
            <HLine x1={691} x2={1308} y={296} color="#7c98a4" />
            <HLine x1={691} x2={1308} y={349} color="#8cb48c" dash={DASHDOT} />
            <Curve color="#3c8ce0" pts="696,127 705,130 720,135 740,142 760,151 780,159 800,170 820,182 840,196 860,209 880,223 900,237 920,252 935,265 950,275 965,281 985,286 1010,291 1030,295 1055,298 1080,300 1100,298 1130,298 1150,295 1170,290" />
            <Curve color="#686868" pts="691,163 715,168 740,176 765,187 790,200 815,215 835,226 860,244 885,262 905,278 930,298 955,317 980,330 1000,338 1020,345 1040,351 1070,357 1100,360 1130,358 1150,357 1160,356 1170,353" />
            <Curve color="#b02838" pts="691,201 705,204 720,207 740,214 765,225 795,238 820,248 845,262 870,281 900,309 925,331 940,341 965,360 995,382 1020,396 1040,406 1065,412 1085,418 1105,421 1130,419 1150,419 1170,418" />
            <g shapeRendering="crispEdges"><Candles data={CANDLES_M5} x={691} /></g>
            <Curve color="#d81818" pts="692,240 962,438" />
            <Curve color="#d81818" pts="863,149 1282,458" />
            <Curve color="#d81818" pts="971,447 1308,319" />
            <Curve color="#d81818" pts="1031,334 1308,238" />

            <path d="M693 132h8l-4 5z" />
            <text x="705" y="138">EURUSD,M5</text>
            <text x="697" y="223">#613749994 sl</text>
            <text x="697" y="287">#613749994 sell 0.01</text>
            <text x="697" y="347">#613749994 tp</text>
            <g fontFamily={ARIAL} fontSize="14">
                <text x="941" y="168" fontSize="23" fill="#bdb76b">EURUSD,M5</text>
                <text x="1173" y="302" fill="#3c84d0">1.7</text>
                <text x="1170" y="366" fill="#e8e840">14.9</text>
                <text x="1170" y="431" fill="#c02828">31.4</text>
            </g>
            <text x="1069" y="454" fontFamily={MONO} fontSize="13" fill="#f4f440">Spread: 6.. Next Bar in 04:06</text>

            {[473, 477, 520, 524].map((y) => <HLine key={y} x1={691} x2={1308} y={y} color="#303030" dash="4 3" />)}
            <Curve color="#1c2c78" pts="691,519 700,521 710,522 725,524 740,527 800,527 815,519 822,516 828,506 836,505 840,497 848,496 852,487 860,486 864,493 872,492 876,498 884,499 888,505 897,505 901,509 908,509 912,513 920,514 925,517 937,520 950,524 975,527 1005,525 1018,523 1033,520 1044,513 1053,514 1058,507 1064,507 1068,499 1076,498 1080,489 1089,488 1093,478 1100,478 1104,474 1115,473 1170,471" />
            <Curve color="#40c040" pts="691,500 700,514 708,523 715,526 722,523 729,517 733,508 740,498 748,484 752,481 757,485 763,495 770,511 775,523 780,516 783,505 790,493 797,484 810,479 825,477 835,476 842,471 852,470 858,472 863,485 868,496 876,512 885,523 900,527 973,527 985,521 993,508 1000,490 1006,475 1013,471 1030,470 1040,471 1048,477 1053,484 1062,488 1073,487 1082,481 1090,474 1097,471 1103,480 1110,494 1115,508 1123,520 1130,525 1137,527 1145,526 1152,517 1157,505 1161,490 1168,481 1171,476" />
            <Arrows list={[['b', 727, 518], ['b', 731, 513], ['b', 783, 507], ['c', 807, 522], ['c', 819, 516], ['r', 859, 474], ['r', 863, 482], ['b', 987, 516], ['b', 991, 512], ['c', 1023, 523], ['c', 1035, 520], ['r', 1047, 476], ['r', 1051, 480], ['r', 1099, 473], ['r', 1103, 485], ['s', 1127, 473], ['s', 1139, 472], ['b', 1151, 519], ['b', 1155, 506]]} />
            <text x="694" y="473">SSRC_MTF 0.8143</text>
            <Strength x={691} runs={[-7, 7, -9, 16, -33, 15, -1, 14, -3, 1, -8, 7]} />
            <clipPath id="m5clip"><path d="M691 540h617v10H691z" /></clipPath>
            <text x="694" y="551" clipPath="url(#m5clip)">HP_DIFF 1.00000</text>

            <Panels left={690} right={1308} split={458} osc={461} />
            <PriceScale x={1308} labels={[['1.07345', 157], ['1.07260', 190], ['1.07175', 223], ['1.07090', 256], ['1.07005', 289], ['1.06920', 322], ['1.06835', 355], ['1.06750', 388], ['1.06665', 421], ['1.06580', 454]]} />
            <PriceTag x={1311} y={290} fill="#fff">1.06987</PriceTag>
            <OscScale x={1311} mid={498} />
            <TimeScale x={690} labels={['2015', '06:00', '07:20', '08:40', '10:00', '11:20', '12:40', '14:00']} />
        </ChartSvg>
    );
}


function OneClickTrading() {
    return (
        <TradePanel>
            <TradeTop>
                <SideButton>SELL</SideButton>
                <Lot>
                    <button aria-label="Decrease volume"><Svg w={8} h={4}><path d="M0 0h8L4 4z" fill="#000" /></Svg></button>
                    <input aria-label="Volume" defaultValue="0.01" />
                    <button aria-label="Increase volume"><Svg w={8} h={4}><path d="M0 4h8L4 0z" fill="#000" /></Svg></button>
                </Lot>
                <SideButton>BUY</SideButton>
            </TradeTop>
            <TradeBottom>
                <PriceButton><small>1.06</small><big>98</big><sup>7</sup></PriceButton>
                <PriceButton><small>1.06</small><big>99</big><sup>3</sup></PriceButton>
            </TradeBottom>
        </TradePanel>
    );
}


function WindowCaption({ restore }) {
    return (
        <CaptionButtons>
            <CaptionButton aria-label="Minimize"><Minimize /></CaptionButton>
            <CaptionButton aria-label="Maximize">{restore ? <Restore /> : <Maximize />}</CaptionButton>
            <CaptionButton aria-label="Close"><Close /></CaptionButton>
        </CaptionButtons>
    );
}


const MENU = [['Файл', 44], ['Вид', 35], ['Вставка', 58], ['Графики', 60], ['Сервис', 53], ['Окно', 42], ['Справка', 60]];

const PERIODS = ['M1', 'M5', 'M15', 'M30', 'H1', 'H4', 'D1', 'W1', 'MN'];

const CHART_TABS = [
    ['EURUSD,M1', 81], ['EURUSD,M5', 81], ['EURUSD,M15', 87], ['GBPUSD,Daily', 88], ['USDJPY,Daily', 88],
    ['USDCAD,Daily', 92], ['AUDUSD,H1', 80], ['EURJPY,H1', 76], ['NZDCAD,H1', 80], ['GBPJPY,H1', 76],
];

const TERMINAL_TABS = [
    ['Торговля', 67], ['Активы', 60], ['История Счета', 96], ['Новости', 74], ['Алерты', 59], ['Почтовый ящик', 101], ['Компания', 69],
    ['Маркет', 58], ['Сигналы', 64], ['Библиотека', 80], ['Эксперты', 70], ['Журнал', 60],
];

const COLUMNS = [
    ['Ордер', 120], ['Время', 169], ['Тип', 84], ['Объем', 64], ['Символ', 85], ['Цена', 92], ['S / L', 93], ['T / P', 94],
    ['Цена', 93], ['Комиссия', 93], ['Налоги', 93], ['Своп', 93], ['Прибыль', null],
];

const STATUS_CELLS = [110, 100, 73, 71, 69, 71, 66];


function Toolbars() {
    return (
        <>
            <TopRow>
                <Groups>
                    <ToolGroup>
                        <Grip />
                        <Tool $w={36} aria-label="New chart">{icons.newChart}<Down /></Tool>
                        <Tool $w={34} aria-label="Profiles">{icons.profiles}<Down /></Tool>
                        <Divider />
                        <Tool aria-label="Market watch">{icons.market}</Tool>
                        <Tool aria-label="Data window">{icons.target}</Tool>
                        <Tool aria-label="Navigator">{icons.navigator}</Tool>
                        <Tool $on aria-label="Terminal">{icons.dataWindow}</Tool>
                        <Tool aria-label="Strategy tester">{icons.tester}</Tool>
                        <Divider />
                        <Tool $w={101}>{icons.order}Новый Ордер</Tool>
                        <Tool aria-label="MetaEditor">{icons.book}</Tool>
                        <Tool $w={108} $on>{icons.expert}Авто-торговля</Tool>
                    </ToolGroup>
                    <ToolGroup>
                        <Grip />
                        <Tool aria-label="Bar chart">{icons.bars}</Tool>
                        <Tool $on aria-label="Candlesticks">{icons.candles}</Tool>
                        <Tool aria-label="Line chart">{icons.line}</Tool>
                        <Divider />
                        <Tool aria-label="Zoom in">{icons.zoomIn}</Tool>
                        <Tool aria-label="Zoom out">{icons.zoomOut}</Tool>
                        <Tool aria-label="Tile windows">{icons.tile}</Tool>
                        <Divider />
                        <Tool $on aria-label="Auto scroll">{icons.autoScroll}</Tool>
                        <Tool $on aria-label="Chart shift">{icons.shift}</Tool>
                        <Divider />
                        <Tool $w={35} aria-label="Indicators">{icons.indicators}<Down /></Tool>
                        <Tool $w={36} aria-label="Periods">{icons.clock}<Down /></Tool>
                        <Tool $w={36} aria-label="Templates">{icons.template}<Down /></Tool>
                    </ToolGroup>
                </Groups>
                <SearchArea>
                    <SearchBox>
                        <input type="text" aria-label="Search" />
                        {icons.search}
                    </SearchBox>
                    <Svg w={20} h={18}>
                        <rect x="1" y="1" width="18" height="13" rx="4" fill="#8ca4c8" />
                        <path d="M5 13h6l-5 5z" fill="#8ca4c8" />
                        <text x="7" y="12" fontSize="10" fontWeight="bold" fill="#fff">4</text>
                    </Svg>
                </SearchArea>
            </TopRow>
            <Groups>
                <ToolGroup>
                    <Grip />
                    <Tool $on aria-label="Cursor" $w={26}>{icons.cursor}</Tool>
                    <Tool aria-label="Crosshair">{icons.cross}</Tool>
                    <Divider />
                    <Tool aria-label="Vertical line">{icons.vline}</Tool>
                    <Tool aria-label="Horizontal line">{icons.hline}</Tool>
                    <Tool aria-label="Trendline">{icons.trend}</Tool>
                    <Tool aria-label="Channel">{icons.channel}</Tool>
                    <Tool aria-label="Fibonacci">{icons.fibo}</Tool>
                    <Tool aria-label="Text"><b>A</b></Tool>
                    <Tool aria-label="Label">{icons.label}</Tool>
                    <Tool $w={36} aria-label="Arrows">{icons.shapes}<Down /></Tool>
                </ToolGroup>
                <ToolGroup>
                    <Grip />
                    {PERIODS.map((p) => <Period key={p} $on={p === 'M1'}>{p}</Period>)}
                </ToolGroup>
            </Groups>
        </>
    );
}


function Orders() {
    return (
        <Table>
            <colgroup>
                {COLUMNS.map(([, width], i) => <col key={i} width={width || undefined} />)}
            </colgroup>
            <thead>
                <tr>
                    {COLUMNS.map(([label], i) => (
                        <th key={i}>
                            {i === 0 ? <Cell>{label}<Svg w={16} h={8}><path d="M8 7l4-6 4 6z" stroke="#aaa" /></Svg></Cell> : label}
                        </th>
                    ))}
                </tr>
            </thead>
            <tbody>
                <Row>
                    <td><Cell><OrderIcon color="#e04418" />613749994</Cell></td>
                    <td>2015.04.21 14:31:21</td><td>sell</td><td>0.01</td><td>eurusd</td><td>1.07004</td><td>1.07170</td><td>1.06850</td>
                    <td>1.06993</td><td>-1.85</td><td>0.00</td><td>0.00</td>
                    <td><Cell $end>5.94<CloseMark aria-label="Close order"><Cross /></CloseMark></Cell></td>
                </Row>
                <Row $summary>
                    <td colSpan="12">
                        <Cell><IconSlot><BalanceIcon /></IconSlot><span>Баланс: 77 194.72 RUR&nbsp; Средства: 77 198.81&nbsp; Маржа: 114.77&nbsp; Свободная маржа: 77 084.04&nbsp; Уровень: 67265.90%</span></Cell>
                    </td>
                    <td><Cell $end>4.09<CloseMark as="span" /></Cell></td>
                </Row>
                <Row $selected>
                    <td><Cell><OrderIcon color="#3090e0" />613749522</Cell></td>
                    <td>2015.04.21 13:13:53</td><td>buy stop</td><td>0.01</td><td>gbpusd</td><td>1.50707</td><td>0.00000</td><td>0.00000</td>
                    <td>1.48788</td><td colSpan="3" />
                    <td><Cell $end><CloseMark aria-label="Delete order"><Cross /></CloseMark></Cell></td>
                </Row>
            </tbody>
        </Table>
    );
}


function TerminalPanel() {
    return (
        <Terminal>
            <Rail>
                <button aria-label="Close terminal"><Svg w={7}><path d="M1 1l5 5M6 1L1 6" stroke="#000" strokeWidth="1.500" /></Svg></button>
                <RailLabel>Терминал</RailLabel>
            </Rail>
            <TerminalBody>
                <TableArea>
                    <TableView><Orders /></TableView>
                    <ScrollBar>
                        <button aria-label="Scroll up"><Svg w={7} h={4}><path d="M0 4h7L3.500 0z" fill="#000" /></Svg></button>
                        <span />
                        <button aria-label="Scroll down"><Svg w={7} h={4}><path d="M0 0h7L3.500 4z" fill="#000" /></Svg></button>
                    </ScrollBar>
                </TableArea>
                <TabStrip $h={20} $pad={2}>
                    {TERMINAL_TABS.map(([label, w], i) => (
                        <Tab key={label} $w={w} $active={i === 0}>{label}{label === 'Новости' && <b>99</b>}</Tab>
                    ))}
                </TabStrip>
            </TerminalBody>
        </Terminal>
    );
}


function WindowsTaskBar() {
    return (
        <TaskBar>
            <StartButton>
                <Svg w={16}>
                    <path d="M2 3q3-2 5 0l-1 5q-3-2-5 0z" fill="#f05020" />
                    <path d="M8 3q3 2 6 0l-1 5q-3 2-6 0z" fill="#70b030" />
                    <path d="M1 9q3-2 5 0l-1 5q-3-2-5 0z" fill="#3080d8" />
                    <path d="M7 9q3 2 6 0l-1 5q-3 2-6 0z" fill="#f8c020" />
                </Svg>
                Пуск
            </StartButton>
            <TaskDivider $gap={7} />
            <Quick>
                <Launcher aria-label="Server manager">
                    <Svg w={32}>
                        <path d="M5 2l9-1 3 2v23l-9 2-3-2z" fill="#a8b0b8" stroke="#808890" />
                        <path d="M6 6h8M6 9h8M6 12h8M6 15h8" stroke="#e8ecf0" strokeWidth="2" />
                        <path d="M14 15l4-4h4l3 3 5 1v4H12z" fill="#d8dce0" stroke="#8a929a" />
                        <path d="M10 20l14-3 6 3v8l-15 3-5-3z" fill="#9cabb8" stroke="#66727e" />
                        <path d="M10 20l5 2 15-2M15 22v9M21 21v4" stroke="#dde4ea" />
                    </Svg>
                </Launcher>
                <Launcher aria-label="PowerShell">
                    <Svg w={30} h={26}>
                        <path d="M6 1h21q2 0 2 2l-5 20q-1 2-3 2H2q-2 0-1-3L4 3q1-2 2-2z" fill="#3c84c8" stroke="#90b8dc" />
                        <path d="M9 6l8 7-10 7M17 20h6" stroke="#fff" strokeWidth="3" />
                    </Svg>
                </Launcher>
                <Launcher aria-label="Explorer">
                    <Svg w={34} h={32}>
                        <path d="M2 4h9l2 3h17v20H2z" fill="#f8e49c" stroke="#cfae54" />
                        <path d="M5 2h5v4H5z" fill="#3cae48" /><path d="M14 4h5v4h-5z" fill="#e04838" /><path d="M22 4h6v4h-6z" fill="#58a8e0" />
                        <path d="M2 9h30l-1 18H2z" fill="#fcf0b8" stroke="#d8b860" />
                        <path d="M13 12v14M23 12v14" stroke="#e8d088" />
                        <path d="M6 30V20q0-2 2-2h18q2 0 2 2v10h-5v-7H11v7z" fill="#9cd4f4" stroke="#58a4d4" />
                    </Svg>
                </Launcher>
                <Launcher aria-label="Chrome">
                    <Svg w={28}>
                        <circle cx="14" cy="14" r="13" fill="#e8442c" />
                        <path d="M2 9a13 13 0 0 0 10 18l6-10-4-3-5 2z" fill="#3aaa4c" />
                        <path d="M12 27a13 13 0 0 0 14-18H14l6 8z" fill="#fccc30" />
                        <circle cx="14" cy="14" r="6" fill="#fff" />
                        <circle cx="14" cy="14" r="5" fill="#3c84e0" />
                    </Svg>
                </Launcher>
                <TaskButton aria-label="Task">
                    <Svg w={46} h={38}>
                        <path d="M12 2q6-4 10-1 8-3 12 1 5 2 5 6 6 1 6 6 0 8-5 9 0 5-5 7-1 6-8 6-5 4-10 0-7 0-8-6-6-3-5-8-4-3-2-8 2-4 4-5 1-6 6-7z" fill="#000" />
                    </Svg>
                </TaskButton>
                <TaskButton $active aria-label="Alpari">
                    <Svg w={32}>
                        <rect width="32" height="32" rx="2" fill="#000" />
                        <path d="M5 11c7-9 15-9 22 0" stroke="#d03c28" strokeWidth="1.500" strokeDasharray="2 1" />
                        <path d="M5 14c7-9 15-9 22 0" stroke="#d88028" strokeWidth="1.500" strokeDasharray="2 1" />
                        <path d="M5 17c7-9 15-9 22 0" stroke="#a0b030" strokeWidth="1.500" strokeDasharray="2 1" />
                        <path d="M5 20c7-9 15-9 22 0" stroke="#58a030" strokeWidth="1.500" strokeDasharray="2 1" />
                        <text x="16" y="27" textAnchor="middle" fontSize="8" fill="#fff">alpari</text>
                    </Svg>
                </TaskButton>
            </Quick>
            <TaskDivider $gap={0} />
            <Lang>RU</Lang>
            <TaskDivider $gap={0} />
            <Tray>
                <Svg w={7} h={10}><path d="M1 4l2.500-3L6 4M1 9l2.500-3L6 9" stroke="#000" strokeWidth="1.500" /></Svg>
                <Svg w={17}><path d="M2 1v15" stroke="#888" strokeWidth="2" /><path d="M3 2h6l1 2h6l-2 3 1 3H9L8 9H3z" fill="#fff" stroke="#888" /></Svg>
                <Svg w={17}><rect x="5" y="4" width="11" height="10" fill="#ccc" stroke="#555" /><path d="M7 16h8M3 6v7h2" stroke="#555" strokeWidth="1.500" /><path d="M1 1h5v5H1z" fill="#eee" stroke="#555" /></Svg>
                <Svg w={17}><path d="M1 6h3l5-4v13l-5-4H1z" fill="#eee" stroke="#888" /><circle cx="12" cy="12" r="4.500" fill="#dc3028" /><path d="M10 10l4 4M14 10l-4 4" stroke="#fff" strokeWidth="1.500" /></Svg>
                <Clock>13:40<br />21.04.2015</Clock>
                <Svg w={15} h={18}><path d="M0 2h15v11H0z" fill="#2c6cc8" /><path d="M0 2h15L0 9z" fill="#64a4ec" /><path d="M4 14h9v3H4z" fill="#445" /></Svg>
            </Tray>
        </TaskBar>
    );
}


function App() {
    return (
        <Desktop>
            <GlobalStyle />
            <AppWindow>
                <TitleBar>
                    <AlpariLogo />
                    <TitleScribble />
                    <TitleText>Alpari-PRO - EURUSD,M1</TitleText>
                    <WindowCaption restore />
                </TitleBar>
                <MenuBar>
                    {MENU.map(([label, w]) => <MenuItem key={label} $w={w}>{label}</MenuItem>)}
                </MenuBar>
                <Toolbars />
                <Workspace>
                    <ChildWindow>
                        <TitleBar $child>
                            <ChildIcon />
                            <TitleText>EURUSD,M1</TitleText>
                            <WindowCaption />
                        </TitleBar>
                        <ChartFrame>
                            <ChartM1 />
                            <OneClickTrading />
                        </ChartFrame>
                    </ChildWindow>
                    <ChildWindow>
                        <TitleBar $child $inactive>
                            <ChildIcon />
                            <TitleText>EURUSD,M5</TitleText>
                            <WindowCaption />
                        </TitleBar>
                        <ChartFrame><ChartM5 /></ChartFrame>
                    </ChildWindow>
                </Workspace>
                <TabStrip $h={22} $pad={4}>
                    {CHART_TABS.map(([label, w], i) => <Tab key={label} $w={w} $active={i === 0}>{label}</Tab>)}
                    <TabArrows>
                        <Svg w={4} h={8}><path d="M4 0v8L0 4z" fill="#999" /></Svg>
                        <Svg w={4} h={8}><path d="M0 0v8l4-4z" fill="#999" /></Svg>
                    </TabArrows>
                </TabStrip>
                <TerminalPanel />
                <StatusBar>
                    <StatusCell $first>Для справки, нажмите F1</StatusCell>
                    <StatusCell $w={STATUS_CELLS[0]}>Default</StatusCell>
                    {STATUS_CELLS.slice(1).map((w, i) => <StatusCell key={i} $w={w} />)}
                    <StatusCell $w={146}>
                        <Svg w={24} h={13}>
                            {Array.from({ length: 8 }, (_, i) => (
                                <g key={i}>
                                    <rect x={i * 3} y="0" width="2" height={9 - i} fill="#708c20" />
                                    <rect x={i * 3} y={10 - i} width="2" height={3 + i} fill="#205068" />
                                </g>
                            ))}
                        </Svg>
                        3444/8 kb
                    </StatusCell>
                    <Svg w={16}><path d="M1 15L15 1M5 15L15 5M9 15l6-6M13 15l2-2" stroke="#848284" strokeWidth="1.500" /></Svg>
                </StatusBar>
                <Tooltip role="tooltip">Вертикальный масштаб</Tooltip>
            </AppWindow>
            <WindowsTaskBar />
        </Desktop>
    );
}


export default App;
